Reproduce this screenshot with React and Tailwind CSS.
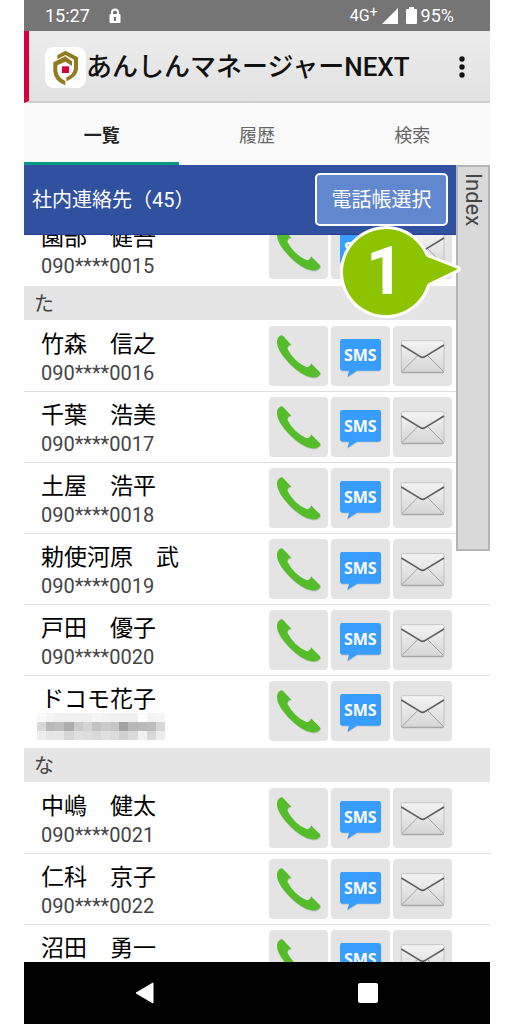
import { useState } from 'react';

const TABS = ['一覧', '履歴', '検索'];

const SECTIONS = [
    {
        kana: null,
        contacts: [{ name: '園部　健吾', phone: '090****0015' }],
    },
    {
        kana: 'た',
        contacts: [
            { name: '竹森　信之', phone: '090****0016' },
            { name: '千葉　浩美', phone: '090****0017' },
            { name: '土屋　浩平', phone: '090****0018' },
            { name: '勅使河原　武', phone: '090****0019' },
            { name: '戸田　優子', phone: '090****0020' },
            { name: 'ドコモ花子', phone: null },
        ],
    },
    {
        kana: 'な',
        contacts: [
            { name: '中嶋　健太', phone: '090****0021' },
            { name: '仁科　京子', phone: '090****0022' },
            { name: '沼田　勇一', phone: '090****0023' },
        ],
    },
];

// grey levels of the masked phone number, row by row
const MASK = [
    '#fafafa', '#f4f4f4', '#f1f1f1', '#f0f0f0', '#f0f0f0', '#f0f0f0', '#f5f5f5', '#f3f3f3', '#f0f0f0', '#efefef', '#efefef', '#ffffff', '#f4f4f4', '#f6f6f6',
    '#d8d8d8', '#bababa', '#bfbfbf', '#adadad', '#cbcbcb', '#d5d5d5', '#c3c3c3', '#cbcbcb', '#c6c6c6', '#a2a2a2', '#b8b8b8', '#bababa', '#bdbdbd', '#d6d6d6',
    '#ededed', '#e5e5e5', '#e6e6e6', '#d6d6d6', '#e0e0e0', '#dedede', '#d9d9d9', '#e0e0e0', '#dcdcdc', '#d0d0d0', '#dadada', '#f1f1f1', '#d8d8d8', '#ececec',
];

function MaskedPhone() {
    return (
        <div className="-ml-1 grid w-32 grid-cols-14" aria-label="非表示">
            {MASK.map((color, i) => (
                <span key={i} className="h-[9px]" style={{ backgroundColor: color }} />
            ))}
        </div>
    );
}

function ShieldLogo() {
    return (
        <svg viewBox="0 0 123 123" className="size-[41px] shrink-0" aria-hidden="true">
            <rect width="123" height="123" rx="26" fill="#fff" />
            <path
                d="M37 25 L61 11 L99 31 V66 Q97 89 64 103 V91 Q86 82 87 64 V38 L61 24 L37 37 Z"
                fill="#93791f"
            />
            <path
                d="M25 46 L61 28 L81 43 V57 L61 44 L37 55 V72 Q39 91 61 102 V115 Q27 101 25 74 Z"
                fill="#93791f"
            />
            <rect x="51" y="58" width="21" height="20" fill="#d4003c" />
        </svg>
    );
}

function PhoneIcon() {
    return (
        <svg viewBox="0 0 177 180" className="h-15 w-full" aria-hidden="true">
            <path
                d="M32 30 Q38 25 43 31 L67 56 Q56 56 55 68 Q75 106 113 124 Q124 123 126 112 L153 139 Q157 144 149 150 Q142 156 127 154 Q98 149 62 113 Q22 72 24 45 Q25 34 32 30 Z"
                fill="#c9c9c9"
                transform="translate(1 3)"
            />
            <path
                d="M32 30 Q38 25 43 31 L67 56 Q56 56 55 68 Q75 106 113 124 Q124 123 126 112 L153 139 Q157 144 149 150 Q142 156 127 154 Q98 149 62 113 Q22 72 24 45 Q25 34 32 30 Z"
                fill="#55bd29"
            />
        </svg>
    );
}

function SmsIcon() {
    return (
        <svg viewBox="0 0 177 180" className="h-15 w-full" aria-hidden="true">
            <path
                d="M34 39 H143 Q150 39 150 46 V127 Q150 134 143 134 H78 L49 153 L54 134 H34 Q27 134 27 127 V46 Q27 39 34 39 Z"
                fill="#cbcbcb"
                transform="translate(1 3)"
            />
            <path
                d="M34 39 H143 Q150 39 150 46 V127 Q150 134 143 134 H78 L49 153 L54 134 H34 Q27 134 27 127 V46 Q27 39 34 39 Z"
                fill="#379dfe"
            />
            <text x="88" y="104" textAnchor="middle" fontSize="48" fontWeight="700" fill="#fff" className="font-['Open_Sans',sans-serif]">
                SMS
            </text>
        </svg>
    );
}

function MailIcon() {
    return (
        <svg viewBox="0 0 177 180" className="h-15 w-full" aria-hidden="true">
            <defs>
                <linearGradient id="paper" x1="0" y1="0" x2="0" y2="1">
                    <stop offset="0" stopColor="#f4f4f4" />
                    <stop offset="1" stopColor="#d6d6d6" />
                </linearGradient>
            </defs>
            <rect x="25" y="46" width="128" height="96" rx="5" fill="#a3a3a3" />
            <rect x="25" y="44" width="128" height="94" rx="5" fill="url(#paper)" stroke="#b4b4b4" strokeWidth="2" />
            <path d="M76 87 L27 136 M102 87 L151 136" stroke="#a2a2a2" strokeWidth="3" fill="none" />
            <path d="M25 57 L81 91 Q89 97 97 91 L153 57" stroke="#606060" strokeWidth="5" fill="none" />
        </svg>
    );
}

function ActionButton({ label, children }) {
    return (
        <button type="button" aria-label={label} className="h-15 w-[59px] rounded-sm bg-[#e4e4e4]">
            {children}
        </button>
    );
}

function ContactRow({ name, phone }) {
    return (
        <li className="flex h-[71px] items-center border-t border-[#dedede] pr-[38px] pl-[17px] first:border-t-0">
            <div className="min-w-0 flex-1 pt-0.5">
                <div className="text-[23px] leading-8 text-black">{name}</div>
                {phone ? (
                    <div className="text-xl leading-6 text-[#444]">{phone}</div>
                ) : (
                    <div className="flex h-6 items-end">
                        <MaskedPhone />
                    </div>
                )}
            </div>
            <div className="flex gap-[3px]">
                <ActionButton label="電話">
                    <PhoneIcon />
                </ActionButton>
                <ActionButton label="SMS">
                    <SmsIcon />
                </ActionButton>
                <ActionButton label="メール">
                    <MailIcon />
                </ActionButton>
            </div>
        </li>
    );
}

function StepMarker() {
    return (
        <svg viewBox="0 0 130 96" className="pointer-events-none absolute top-[59px] right-[24px] h-24 w-[130px]" aria-hidden="true">
            <path
                d="M89 30 A43 43 0 1 0 91 61 Q92 59 95 58 L122 45 L94 34 Q90 33 89 30 Z"
                fill="#8dc400"
                stroke="#fff"
                strokeWidth="6"
                strokeLinejoin="round"
                paintOrder="stroke"
            />
            <text x="49" y="70" textAnchor="middle" fontSize="66" fontWeight="700" fill="#fff" className="font-[Roboto,sans-serif]">
                1
            </text>
        </svg>
    );
}

export default function App() {
    const [tab, setTab] = useState('一覧');

    return (
        <div className="h-screen bg-white px-6 font-[Roboto,'Noto_Sans_CJK_JP',sans-serif]">
            <div className="flex h-full flex-col overflow-hidden">
                <div className="flex h-[31px] shrink-0 items-center bg-[#757575] pr-9 pl-[21px] text-white">
                    <span className="text-lg leading-6">15:27</span>
                    <svg viewBox="0 0 12 16" className="ml-[19px] h-4 w-3" aria-hidden="true">
                        <path d="M3 7 V4.500 A3 3 0 0 1 9 4.500 V7" fill="none" stroke="#fff" strokeWidth="2" />
                        <rect x="0.500" y="6" width="11" height="9" rx="1" fill="#fff" />
                        <path d="M6 9 V13" stroke="#757575" strokeWidth="2" />
                    </svg>
                    <span className="ml-auto text-base leading-6">
                        4G<sup className="-top-1 text-sm">+</sup>
                    </span>
                    <svg viewBox="0 0 16 16" className="ml-1 size-4" aria-hidden="true">
                        <path d="M0 16 L16 0 V16 Z" fill="#fff" />
                    </svg>
                    <svg viewBox="0 0 11 17" className="mr-1 ml-2 h-[17px] w-[11px]" aria-hidden="true">
                        <path d="M3 0 H8 V2 H10 Q11 2 11 3 V16 Q11 17 10 17 H1 Q0 17 0 16 V3 Q0 2 1 2 H3 Z" fill="#fff" />
                    </svg>
                    <span className="text-lg leading-6">95%</span>
                </div>

                <header className="flex h-[72px] shrink-0 items-center border-b-2 border-l-5 border-b-[#cfcfcf] border-l-[#d4003c] bg-linear-to-b from-[#ededed] to-[#e1e1e1] pt-0.5 pl-4">
                    <ShieldLogo />
                    <h1 className="text-[26px] leading-10 font-medium text-[#111]">あんしんマネージャーNEXT</h1>
                    <button type="button" aria-label="メニュー" className="mr-4 ml-auto flex h-10 w-6 items-center justify-center">
                        <svg viewBox="0 0 6 22" className="h-[22px] w-1.5" fill="#111" aria-hidden="true">
                            <circle cx="3" cy="3" r="2.700" />
                            <circle cx="3" cy="11" r="2.700" />
                            <circle cx="3" cy="19" r="2.700" />
                        </svg>
                    </button>
                </header>

                <nav className="grid h-[62px] shrink-0 grid-cols-3 bg-[#fafafa]">
                    {TABS.map((name) => (
                        <button
                            key={name}
                            type="button"
                            onClick={() => setTab(name)}
                            className={`border-b-3 pt-1.5 text-lg ${
                                tab === name ? 'border-[#009986] font-bold text-[#222]' : 'border-transparent text-[#666]'
                            }`}
                        >
                            {name}
                        </button>
                    ))}
                </nav>

                <main className="relative flex min-h-0 flex-1 flex-col">
                    <div className="mr-[34px] flex h-[70px] shrink-0 items-center justify-between border-b border-[#24408f] bg-[#3050a0] pr-2 pl-2 text-white">
                        <h2 className="text-xl">社内連絡先（45）</h2>
                        <button type="button" className="h-[53px] w-[133px] rounded-[5px] border-2 border-white bg-[#6187ce] text-xl">
                            電話帳選択
                        </button>
                    </div>

                    <div className="min-h-0 flex-1 overflow-hidden">
                        <div className="-mt-[22px]">
                            {SECTIONS.map((section) => (
                                <section key={section.kana ?? 'top'} className="pb-0.5">
                                    {section.kana && (
                                        <h3 className="h-[34px] bg-[#e5e5e5] pl-2.5 text-xl leading-9 text-[#444]">{section.kana}</h3>
                                    )}
                                    <ul>
                                        {section.contacts.map((contact) => (
                                            <ContactRow key={contact.name} {...contact} />
                                        ))}
                                    </ul>
                                </section>
                            ))}
                        </div>
                    </div>

                    <button
                        type="button"
                        className="absolute top-0 right-0 flex h-[386px] w-[34px] items-center justify-start border-2 border-[#b5b5b5] bg-[#d9d9d9] pt-1.5 text-[22px] leading-[30px] text-[#444] [writing-mode:vertical-rl]"
                    >
                        Index
                    </button>
                    <StepMarker />
                </main>

                <footer className="flex h-[62px] shrink-0 items-center justify-between bg-black pr-28 pl-[111px]">
                    <button type="button" aria-label="戻る">
                        <svg viewBox="0 0 19 22" className="h-[22px] w-[19px]" aria-hidden="true">
                            <path d="M18 1 V21 L1 11 Z" fill="#fff" stroke="#fff" strokeLinejoin="round" />
                        </svg>
                    </button>
                    <button type="button" aria-label="ホーム" className="size-5 rounded-xs bg-white" />
                </footer>
            </div>
        </div>
    );
}
